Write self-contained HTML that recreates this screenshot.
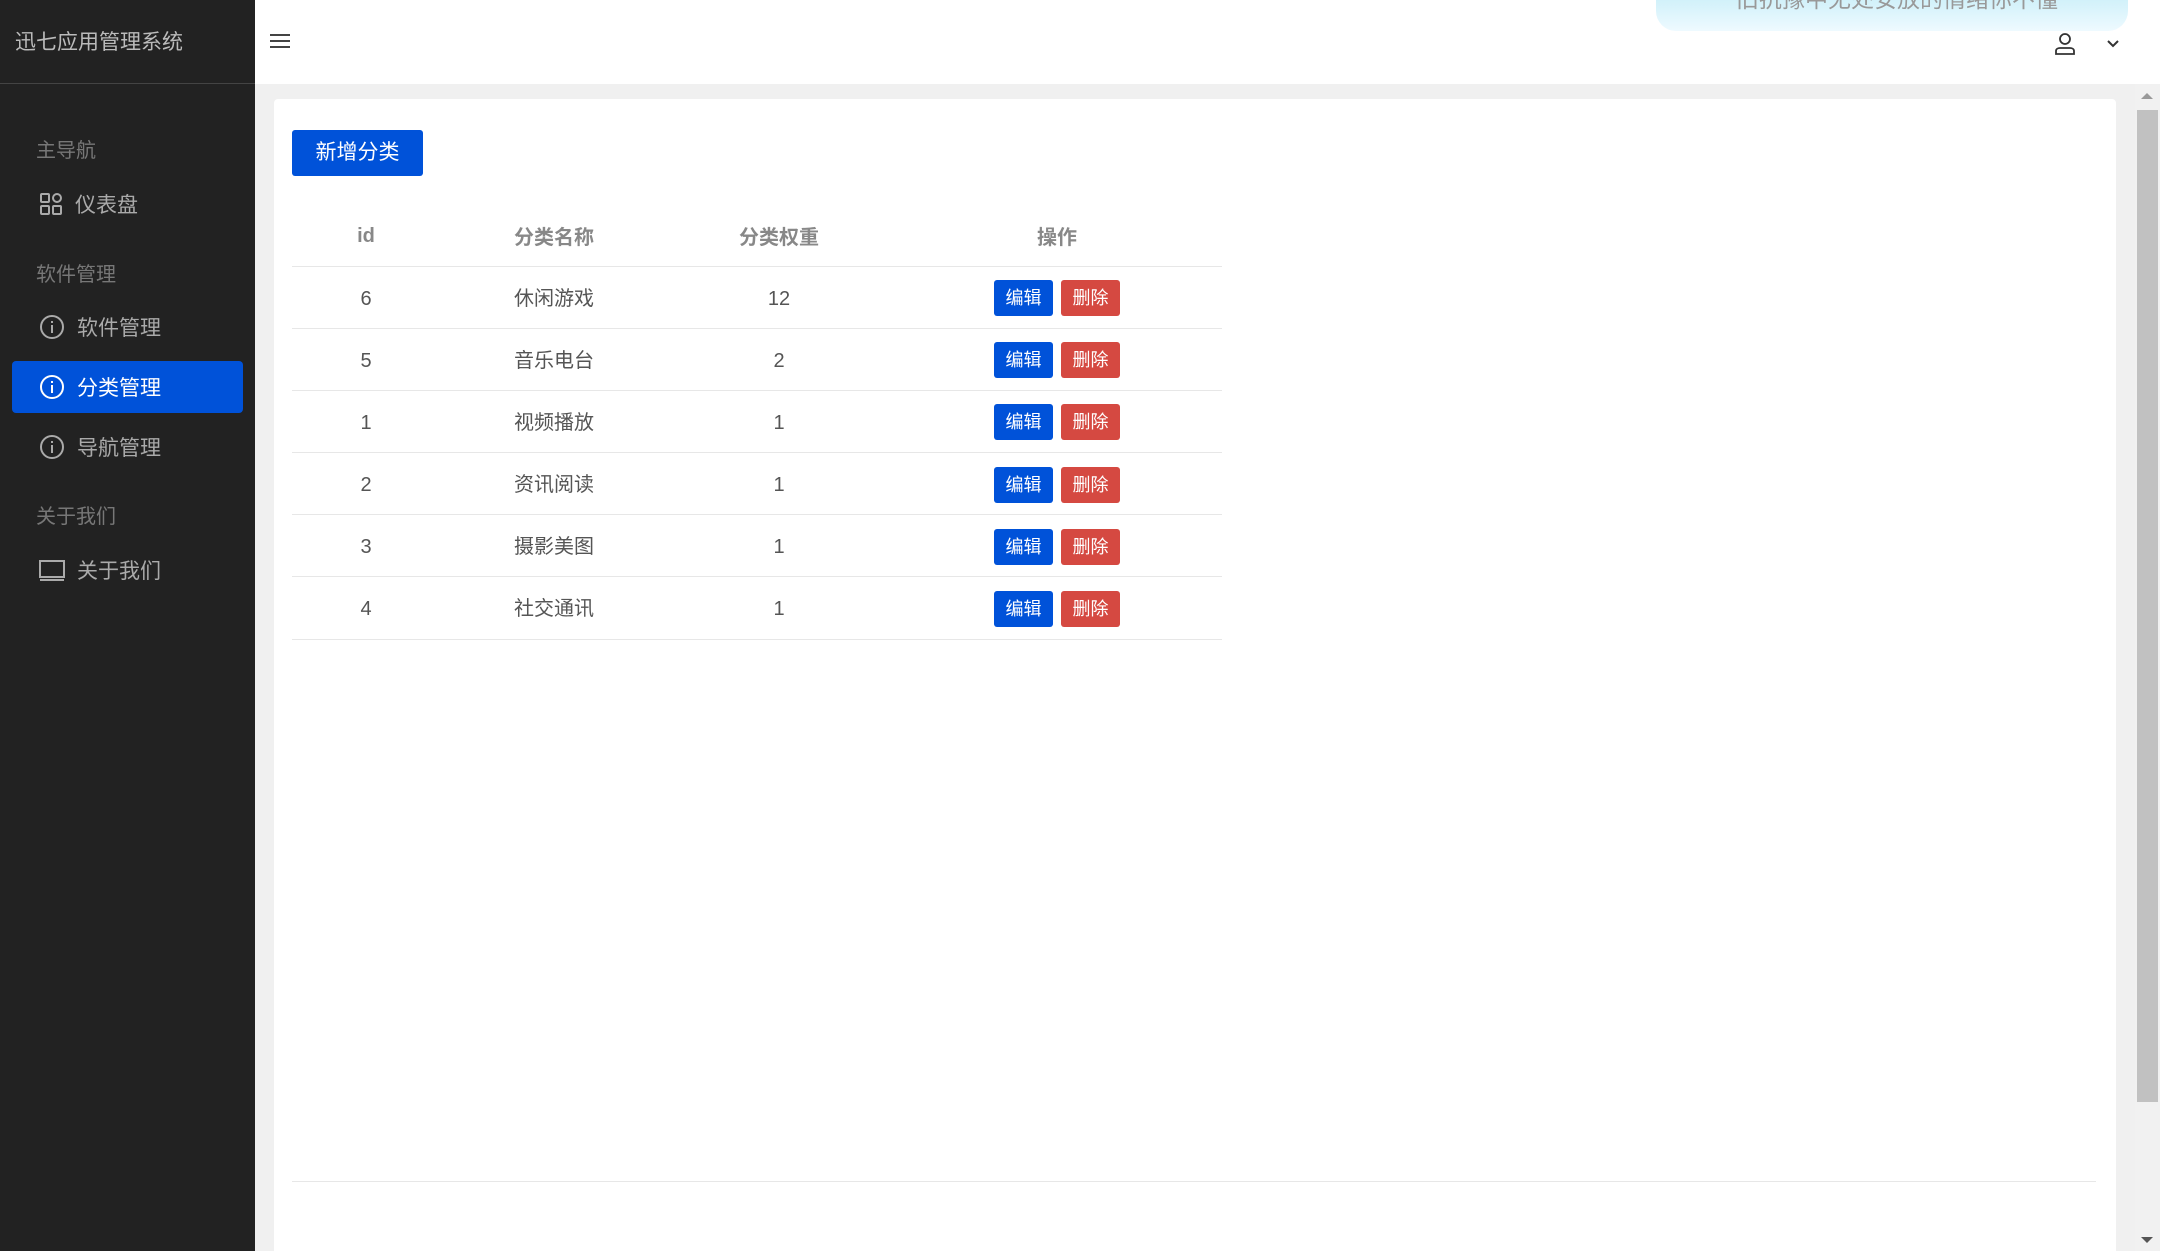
<!DOCTYPE html>
<html><head><meta charset="utf-8"><style>
*{margin:0;padding:0;box-sizing:border-box}
html,body{width:2160px;height:1251px;overflow:hidden}
body{background:#f0f0f0;font-family:"Liberation Sans","Noto Sans CJK SC",sans-serif;position:relative}
.side{position:absolute;left:0;top:0;width:255px;height:1251px;background:#222}
.title{position:absolute;left:15px;top:26px;color:#bbb;font-size:21px}
.sline{position:absolute;left:0;top:83px;width:255px;height:1px;background:#444}
.lbl{position:absolute;left:36px;color:#777;font-size:20px}
.item{position:absolute;left:39px;color:#aaa;font-size:21px;display:flex;align-items:center}
.item svg{margin-right:12px}
.active{position:absolute;left:12px;top:361px;width:231px;height:52px;background:#0052d9;border-radius:4px}
.head{position:absolute;left:255px;top:0;width:1905px;height:84px;background:#fff}
.card{position:absolute;left:274px;top:99px;width:1842px;height:1152px;background:#fff;border-radius:4px 4px 0 0}
.btn{position:absolute;left:292px;top:130px;width:131px;height:46px;background:#0052d9;color:#fff;font-size:21px;border-radius:3px;text-align:center;line-height:46px}
.c{position:absolute;font-size:20px;color:#555;transform:translateX(-50%)}
.n{margin-top:4px}
.th{font-weight:bold;color:#888}
.hl{position:absolute;left:292px;width:930px;height:1px;background:#e7e7e7}
.eb,.db{position:absolute;width:59px;height:36px;border-radius:3px;color:#fff;font-size:18px;text-align:center;line-height:36px}
.eb{left:994px;background:#0052d9}.db{left:1061px;background:#d54941}
.sb{position:absolute;left:2135px;top:84px;width:25px;height:1167px;background:#f1f1f1}
.th2{position:absolute;left:2137px;top:110px;width:21px;height:992px;background:#c1c1c1}
</style></head><body>
<div class="side">
<div class="title">迅七应用管理系统</div>
<div class="sline"></div>
<div class="lbl" style="top:134px">主导航</div>
<div class="item" style="top:189px"><svg width="24" height="24" viewBox="0 0 24 24" fill="none" stroke="#aaa" stroke-width="2"><rect x="2" y="2" width="8" height="8" rx="1"/><rect x="14" y="2" width="8" height="8" rx="4"/><rect x="2" y="14" width="8" height="8" rx="1"/><rect x="14" y="14" width="8" height="8" rx="1"/></svg>仪表盘</div>
<div class="lbl" style="top:258px">软件管理</div>
<div class="item" style="top:312px"><svg width="26" height="26" viewBox="0 0 26 26" fill="none" stroke="#aaa" stroke-width="2"><circle cx="13" cy="13" r="11"/><path d="M13 11v8M13 7v2"/></svg>软件管理</div>
<div class="active"></div>
<div class="item" style="top:372px;color:#fff"><svg width="26" height="26" viewBox="0 0 26 26" fill="none" stroke="#fff" stroke-width="2"><circle cx="13" cy="13" r="11"/><path d="M13 11v8M13 7v2"/></svg>分类管理</div>
<div class="item" style="top:432px"><svg width="26" height="26" viewBox="0 0 26 26" fill="none" stroke="#aaa" stroke-width="2"><circle cx="13" cy="13" r="11"/><path d="M13 11v8M13 7v2"/></svg>导航管理</div>
<div class="lbl" style="top:500px">关于我们</div>
<div class="item" style="top:555px"><svg width="26" height="26" viewBox="0 0 26 26" fill="none" stroke="#aaa" stroke-width="2"><rect x="1" y="4" width="24" height="16"/><path d="M1 23h24"/></svg>关于我们</div>
</div>
<div class="head">
<svg style="position:absolute;left:15px;top:33px" width="20" height="16" viewBox="0 0 20 16" stroke="#444" stroke-width="2"><path d="M0 2h20M0 8h20M0 14h20"/></svg>
<div style="position:absolute;left:1401px;top:-10px;width:472px;height:41px;border-radius:0 0 20px 20px;background:linear-gradient(#c8eef8,#eefaff);color:#999;font-size:23px;padding-left:80px;line-height:18px">旧抗豫中无处安放的情绪你不懂</div>
<svg style="position:absolute;left:1799px;top:33px" width="22" height="22" viewBox="0 0 22 22" fill="none" stroke="#333" stroke-width="1.8"><circle cx="11" cy="6" r="5"/><path d="M2 21v-3c0-2 2-3 4-3h10c2 0 4 1 4 3v3z"/></svg>
<svg style="position:absolute;left:1851px;top:39px" width="14" height="10" viewBox="0 0 14 10" fill="none" stroke="#333" stroke-width="2"><path d="M2 2l5 5 5-5"/></svg>
</div>
<div class="card"></div>
<div class="btn">新增分类</div>
<div class="c th n" style="left:366px;top:221px">id</div>
<div class="c th" style="left:554px;top:221px">分类名称</div>
<div class="c th" style="left:779px;top:221px">分类权重</div>
<div class="c th" style="left:1057px;top:221px">操作</div>
<div class="hl" style="top:266px"></div>
<div class="c n" style="left:366px;top:284px">6</div><div class="c" style="left:554px;top:282px">休闲游戏</div><div class="c n" style="left:779px;top:284px">12</div><div class="eb" style="top:280px">编辑</div><div class="db" style="top:280px">删除</div>
<div class="hl" style="top:328px"></div>
<div class="c n" style="left:366px;top:346px">5</div><div class="c" style="left:554px;top:344px">音乐电台</div><div class="c n" style="left:779px;top:346px">2</div><div class="eb" style="top:342px">编辑</div><div class="db" style="top:342px">删除</div>
<div class="hl" style="top:390px"></div>
<div class="c n" style="left:366px;top:408px">1</div><div class="c" style="left:554px;top:406px">视频播放</div><div class="c n" style="left:779px;top:408px">1</div><div class="eb" style="top:404px">编辑</div><div class="db" style="top:404px">删除</div>
<div class="hl" style="top:452px"></div>
<div class="c n" style="left:366px;top:470px">2</div><div class="c" style="left:554px;top:468px">资讯阅读</div><div class="c n" style="left:779px;top:470px">1</div><div class="eb" style="top:467px">编辑</div><div class="db" style="top:467px">删除</div>
<div class="hl" style="top:514px"></div>
<div class="c n" style="left:366px;top:532px">3</div><div class="c" style="left:554px;top:530px">摄影美图</div><div class="c n" style="left:779px;top:532px">1</div><div class="eb" style="top:529px">编辑</div><div class="db" style="top:529px">删除</div>
<div class="hl" style="top:576px"></div>
<div class="c n" style="left:366px;top:594px">4</div><div class="c" style="left:554px;top:592px">社交通讯</div><div class="c n" style="left:779px;top:594px">1</div><div class="eb" style="top:591px">编辑</div><div class="db" style="top:591px">删除</div>
<div class="hl" style="top:639px"></div>
<div style="position:absolute;left:292px;top:1181px;width:1804px;height:1px;background:#e7e7e7"></div>
<div class="sb"></div><div class="th2"></div>
<svg style="position:absolute;left:2141px;top:92px" width="12" height="8"><path d="M0 7L6 1 12 7z" fill="#999"/></svg>
<svg style="position:absolute;left:2141px;top:1236px" width="12" height="8"><path d="M0 1L6 7 12 1z" fill="#555"/></svg>
</body></html>
